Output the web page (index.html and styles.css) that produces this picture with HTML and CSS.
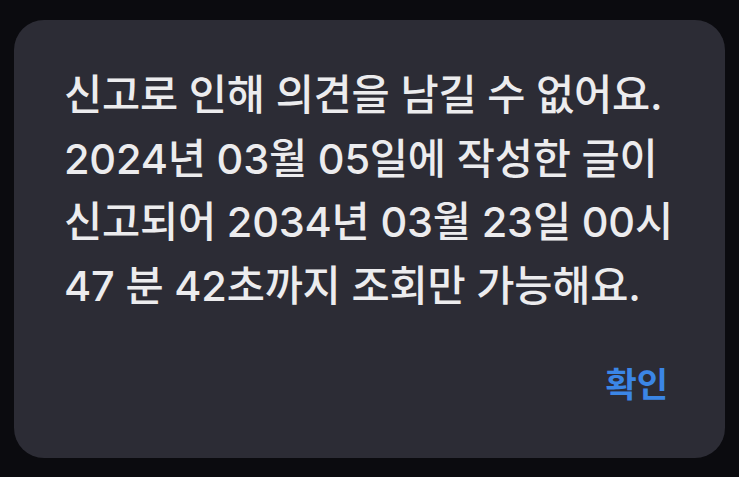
FILE: index.html
```html
<!DOCTYPE html>
<html lang="ko">
<head>
<meta charset="utf-8">
<link rel="stylesheet" href="styles.css">
</head>
<body>
<div class="screen">
  <div class="dialog">
    <p class="message">
      <span class="line">신고로 인해 의견을 남길 수 없어요.</span>
      <span class="line">2024년 03월 05일에 작성한 글이</span>
      <span class="line">신고되어 2034년 03월 23일 00시</span>
      <span class="line">47 분 42초까지 조회만 가능해요.</span>
    </p>
    <div class="actions">
      <button class="confirm">확인</button>
    </div>
  </div>
</div>
</body>
</html>
```
FILE: styles.css
```css
html, body {
  margin: 0;
  padding: 0;
  background: #0b0b0f;
}
.screen {
  width: 739px;
  height: 477px;
  box-sizing: border-box;
  padding: 20px 14px 19px 14px;
  background: #0b0b0f;
}
.dialog {
  height: 100%;
  box-sizing: border-box;
  background: #2c2c35;
  border-radius: 30px;
  padding: 44px 57px 0 50px;
  font-family: Inter, "Noto Sans CJK KR", sans-serif;
  display: flex;
  flex-direction: column;
}
.message {
  margin: 0;
  color: #ececee;
  font-size: 41.5px;
  font-weight: 500;
  line-height: 63.5px;
  letter-spacing: -0.2px;
}
.line {
  display: block;
  white-space: nowrap;
}
.actions {
  display: flex;
  justify-content: flex-end;
  margin-top: 45px;
}
.confirm {
  background: none;
  border: none;
  padding: 0;
  color: #3b86e6;
  font-family: "Noto Sans CJK KR", sans-serif;
  font-size: 34px;
  line-height: 40px;
  font-weight: 700;
}
```
